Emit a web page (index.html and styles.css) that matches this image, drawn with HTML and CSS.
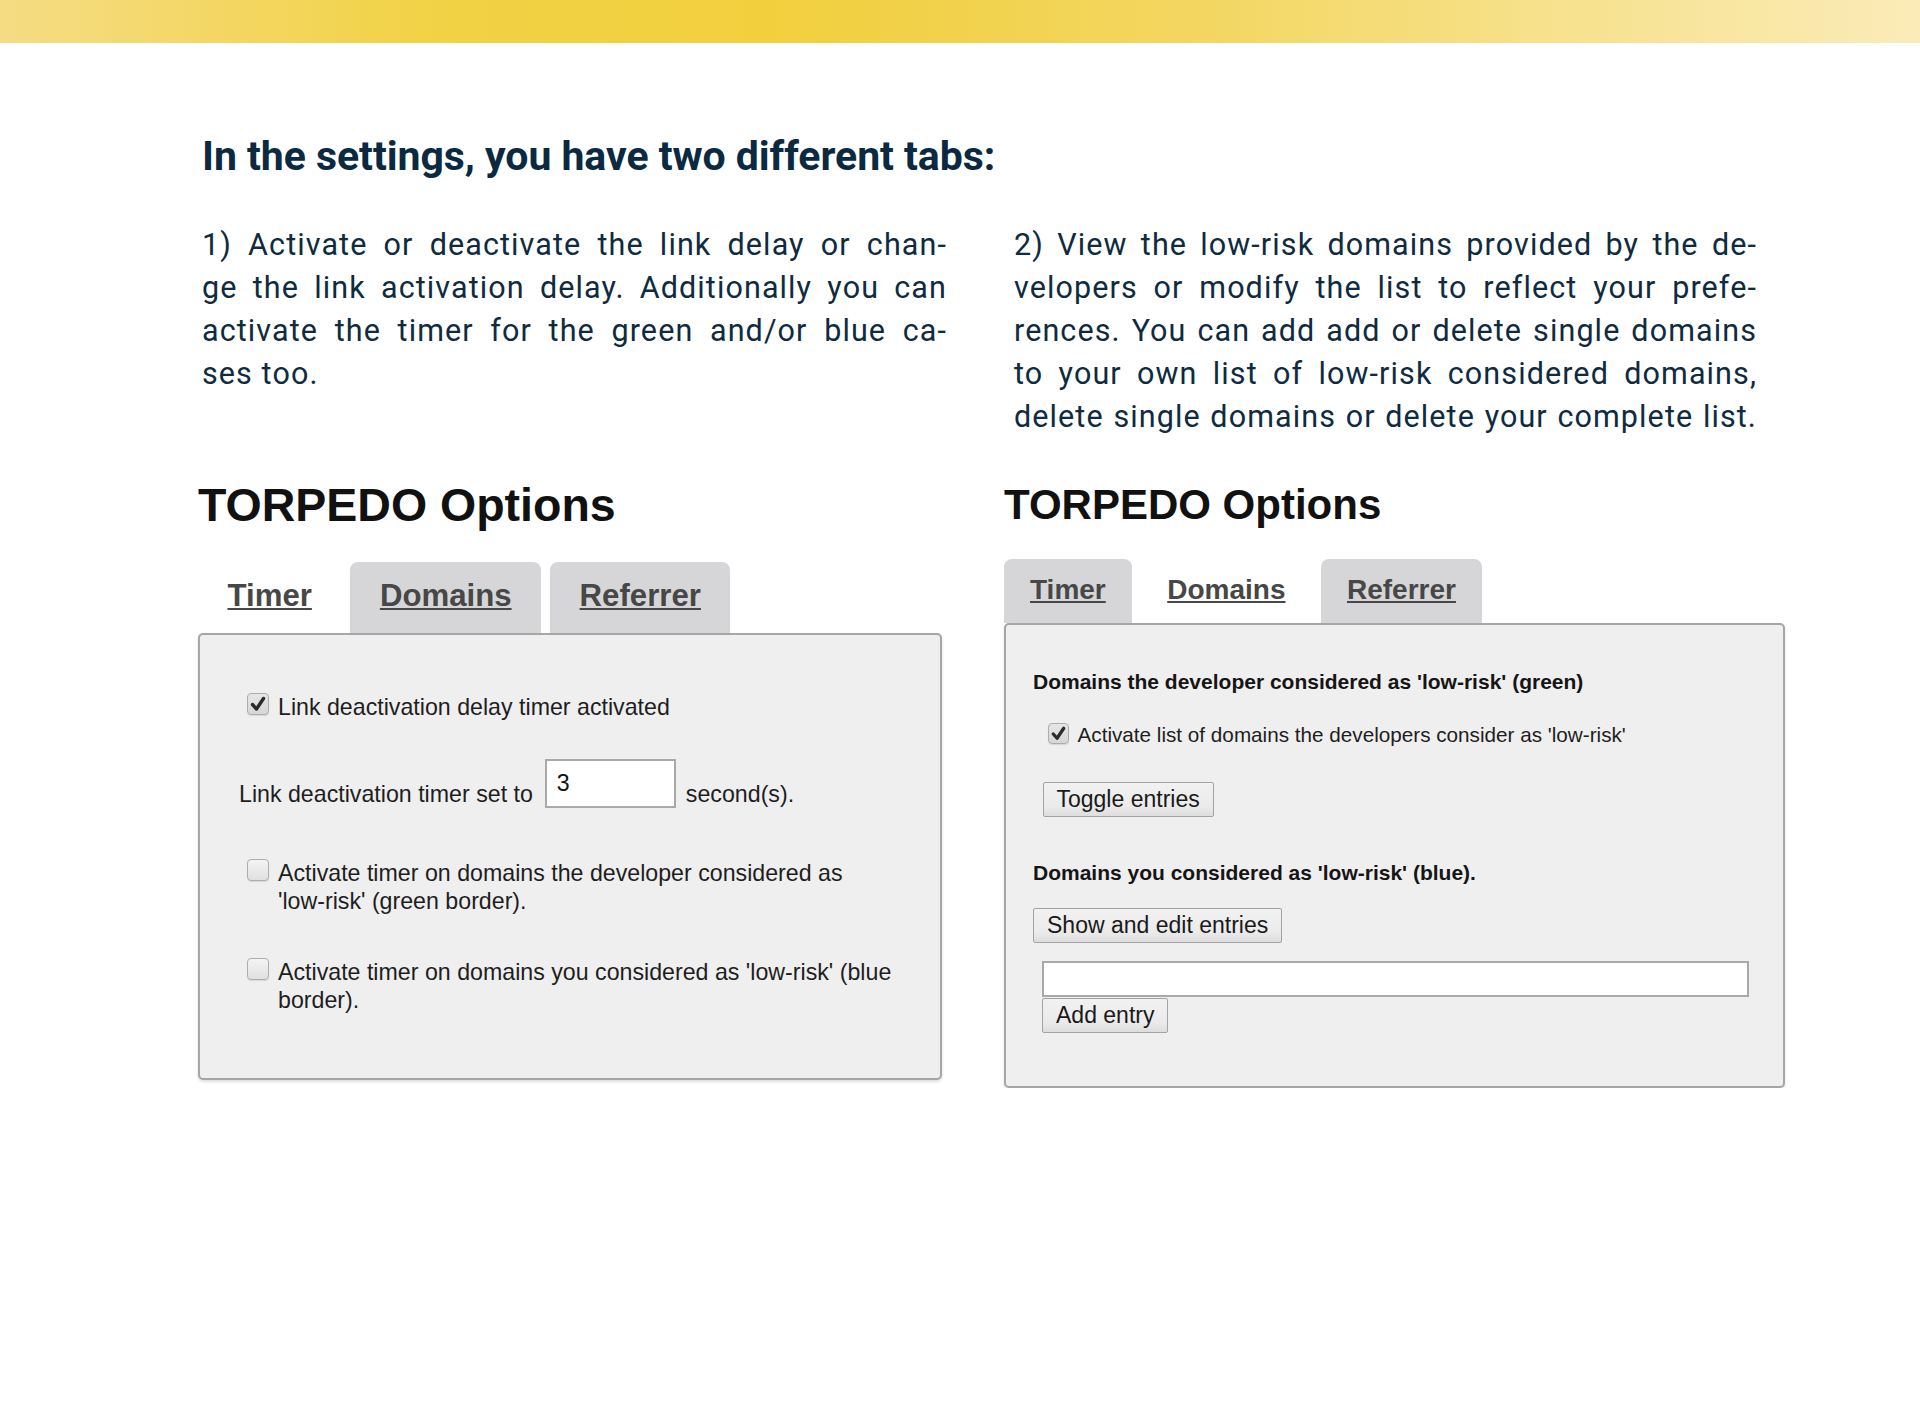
FILE: index.html
```html
<!DOCTYPE html>
<html lang="en">
<head>
<meta charset="utf-8">
<title>TORPEDO settings</title>
<link rel="stylesheet" href="styles.css">
</head>
<body>
<div class="topbar"></div>
<main class="page">
  <section class="intro">
    <h1 class="title">In the settings, you have two different tabs:</h1>
    <div class="cols">
      <p class="para">
        <span class="ln">1) Activate or deactivate the link delay or chan-</span>
        <span class="ln">ge the link activation delay. Additionally you can</span>
        <span class="ln">activate the timer for the green and/or blue ca-</span>
        <span class="ln last">ses too.</span>
      </p>
      <p class="para">
        <span class="ln">2) View the low-risk domains provided by the de-</span>
        <span class="ln">velopers or modify the list to reflect your prefe-</span>
        <span class="ln">rences. You can add add or delete single domains</span>
        <span class="ln">to your own list of low-risk considered domains,</span>
        <span class="ln">delete single domains or delete your complete list.</span>
      </p>
    </div>
  </section>

  <section class="shots">
    <div class="shot shot-left">
      <h2 class="opt-title">TORPEDO Options</h2>
      <div class="tabs">
        <a class="tab active">Timer</a>
        <a class="tab">Domains</a>
        <a class="tab">Referrer</a>
      </div>
      <div class="panel">
        <div class="row row-1">
          <span class="cb checked"><svg viewBox="0 0 22 22" width="22" height="22"><path d="M5.5 11.5 L9.5 16 L16.5 5.5" fill="none" stroke="#2b2b2b" stroke-width="3.4" stroke-linecap="round" stroke-linejoin="round"/></svg></span>
          <span class="lbl">Link deactivation delay timer activated</span>
        </div>
        <div class="row row-2">
          <span class="plain">Link deactivation timer set to</span>
          <span class="num">3</span>
          <span class="plain">second(s).</span>
        </div>
        <div class="row row-3">
          <span class="cb"></span>
          <span class="lbl">Activate timer on domains the developer considered as <span class="nw">'low-risk'</span> (green border).</span>
        </div>
        <div class="row row-4">
          <span class="cb"></span>
          <span class="lbl">Activate timer on domains you considered as <span class="nw">'low-risk'</span> (blue border).</span>
        </div>
      </div>
    </div>

    <div class="shot shot-right">
      <h2 class="opt-title">TORPEDO Options</h2>
      <div class="tabs">
        <a class="tab">Timer</a>
        <a class="tab active">Domains</a>
        <a class="tab">Referrer</a>
      </div>
      <div class="panel">
        <div class="bold b-1">Domains the developer considered as 'low-risk' (green)</div>
        <div class="row r-check">
          <span class="cb checked"><svg viewBox="0 0 22 22" width="21" height="21"><path d="M5.5 11.5 L9.5 16 L16.5 5.5" fill="none" stroke="#2b2b2b" stroke-width="3.4" stroke-linecap="round" stroke-linejoin="round"/></svg></span>
          <span class="lbl">Activate list of domains the developers consider as 'low-risk'</span>
        </div>
        <div class="btn btn-toggle">Toggle entries</div>
        <div class="bold b-2">Domains you considered as 'low-risk' (blue).</div>
        <div class="btn btn-show">Show and edit entries</div>
        <div class="entry"></div>
        <div class="btn btn-add">Add entry</div>
      </div>
    </div>
  </section>
</main>
</body>
</html>
```

FILE: styles.css
```css
* { box-sizing: border-box; }

html, body {
  margin: 0;
  padding: 0;
  background: #ffffff;
}

body {
  font-family: "Roboto", "Liberation Sans", sans-serif;
  color: #0c2a40;
}

.topbar {
  height: 43px;
  background: linear-gradient(90deg, #f5dc84 0%, #f2d246 22%, #f1cf3d 40%, #f3d660 62%, #f7e28f 82%, #fbebb8 100%);
}

.page {
  padding-left: 198px;
}

.intro {
  margin-left: 4px;
  width: 1557px;
}

.title {
  margin: 89px 0 0;
  font-family: "Roboto", sans-serif;
  font-weight: 700;
  font-size: 41px;
  line-height: 48px;
  letter-spacing: -0.05px;
  color: #0b2a42;
}

.cols {
  margin-top: 43px;
  display: grid;
  grid-template-columns: 745px 743px;
  column-gap: 67px;
}

.para {
  margin: 0;
  font-family: "Roboto", sans-serif;
  font-size: 30.5px;
  line-height: 43px;
  letter-spacing: 1.1px;
  color: #0e2b41;
}

.para .ln {
  display: block;
  white-space: nowrap;
  text-align: justify;
  text-align-last: justify;
}

.para .ln.last {
  text-align-last: left;
}

/* screenshots */
.shots {
  margin-top: 41px;
  display: flex;
  gap: 62px;
  align-items: flex-start;
  font-family: "Liberation Sans", Arial, sans-serif;
  color: #1e1e1e;
}

.shot-left { width: 744px; }
.shot-right { width: 781px; }

.opt-title {
  margin: 0;
  font-family: "Liberation Sans", Arial, sans-serif;
  font-weight: 700;
  line-height: 52px;
  color: #111;
}

.shot-left .opt-title { font-size: 46.5px; }
.shot-right .opt-title { font-size: 42px; }

.tabs {
  display: flex;
}

.tab {
  display: block;
  font-weight: 700;
  color: #474747;
  text-decoration: underline;
  text-decoration-thickness: 2px;
  text-underline-offset: 2px;
  border-radius: 8px 8px 0 0;
  background: #d6d6d8;
}

.tab.active {
  background: transparent;
}

.shot-left .tabs {
  margin-top: 31px;
  gap: 9px;
}

.shot-left .tab {
  height: 71px;
  padding: 16px 29.5px 0;
  font-size: 31.2px;
  line-height: 36px;
}

.shot-right .tabs {
  margin-top: 28px;
  gap: 9.5px;
}

.shot-right .tab {
  height: 64px;
  padding: 15px 26px 0;
  font-size: 28px;
  line-height: 32px;
}

.panel {
  background: #efefef;
  border: 2px solid #a6a6a6;
  border-radius: 5px;
  box-shadow: 0 2px 3px rgba(0, 0, 0, 0.13);
}

.shot-left .panel {
  height: 447px;
  padding: 58px 25px 0 39px;
  font-size: 23.2px;
  line-height: 28px;
}

.row {
  display: flex;
  align-items: flex-start;
}

.nw { white-space: nowrap; }

.cb {
  flex: none;
  display: block;
  border: 1px solid #adadad;
  border-radius: 4px;
  background: linear-gradient(#f4f4f4, #e0e0e0);
  box-shadow: 0 1px 1px rgba(0, 0, 0, 0.1);
}

.cb svg { display: block; }

.cb.checked {
  background: linear-gradient(#e6e6e6, #d6d6d6);
}

.shot-left .cb {
  width: 22px;
  height: 22px;
  margin-left: 8px;
  margin-right: 9px;
}

.shot-left .cb svg {
  margin: -1px 0 0 -1px;
}

.lbl { flex: 1; }

.row-2 {
  margin-top: 38px;
  align-items: flex-end;
}

.num {
  width: 131px;
  height: 49px;
  margin: 0 10px 0 12px;
  padding: 0 10px;
  background: #fff;
  border: 2px solid #a9a9a9;
  line-height: 45px;
  color: #111;
}

.row-3 { margin-top: 51px; }
.row-4 { margin-top: 43px; }

/* right panel */
.shot-right .panel {
  height: 465px;
  padding: 45px 20px 0 27px;
}

.bold {
  font-weight: 700;
  font-size: 21px;
  line-height: 24px;
  color: #151515;
}

.r-check {
  margin-top: 29px;
  font-size: 20.7px;
  line-height: 24px;
}

.shot-right .cb {
  width: 21px;
  height: 21px;
  margin-left: 15px;
  margin-right: 8.5px;
}

.shot-right .cb svg {
  margin: -1px 0 0 -1px;
}

.btn {
  display: inline-block;
  height: 35px;
  padding: 3px 13px 0;
  font-size: 23px;
  line-height: 27px;
  color: #1a1a1a;
  background: linear-gradient(#f1f1f1 0%, #ebebeb 70%, #dddddd 100%);
  border: 1px solid #a3a3a3;
  border-radius: 2px;
}

.btn-toggle {
  display: table;
  margin: 35px 0 0 9.5px;
}

.b-2 { margin-top: 44px; }

.btn-show {
  display: table;
  margin-top: 23px;
}

.entry {
  width: 707px;
  height: 36px;
  margin: 18px 0 0 9px;
  background: #fff;
  border: 2px solid #a9a9a9;
}

.btn-add {
  display: table;
  margin: 1px 0 0 9px;
}
```
